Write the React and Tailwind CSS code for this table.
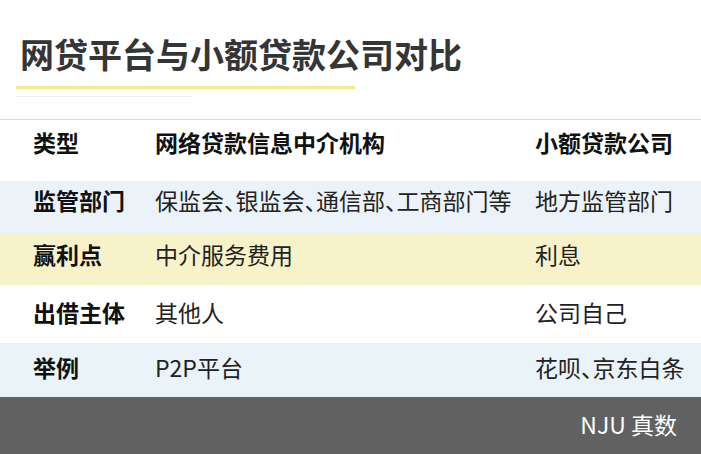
import React from "react";

const P = () => <span className="[font-feature-settings:'halt']">、</span>;

const rows = [
  {
    a: "监管部门",
    b: (
      <>
        保监会<P />银监会<P />通信部<P />工商部门等
      </>
    ),
    c: "地方监管部门",
    bg: "bg-[#ebf3f8]",
    h: "h-[52px] pb-[14px]",
  },
  { a: "赢利点", b: "中介服务费用", c: "利息", bg: "bg-[#f7f2c9]", h: "h-[52px] pb-[9px]" },
  { a: "出借主体", b: "其他人", c: "公司自己", bg: "bg-white", h: "h-[58px] pb-[4px]" },
  {
    a: "举例",
    b: "P2P平台",
    c: (
      <>
        花呗<P />京东白条
      </>
    ),
    bg: "bg-[#e9f3f8]",
    h: "h-[54px] pb-[6px]",
  },
];

export default function App() {
  return (
    <div className="w-[701px] h-[454px] bg-white flex flex-col overflow-hidden font-['Noto_Sans_CJK_SC','Noto_Sans',sans-serif]">
      <div className="h-[119px] flex flex-col">
        <h1 className="pl-[20px] pt-[35px] text-[34px] leading-[37px] font-bold text-[#353535] whitespace-nowrap">
          网贷平台与小额贷款公司对比
        </h1>
        <div className="ml-[16px] mt-[14px] w-[339px] h-[3px] bg-[#f4ea8c]" />
        <div className="ml-[16px] mt-[7px] w-[176px] h-px bg-[#f6eeee]" />
      </div>
      <div className="h-px bg-[#dcdcdc]" />
      <div className="h-[61px] grid grid-cols-[155px_380px_1fr] items-center text-[23px] font-bold text-[#111111] pb-[16px]">
        <div className="pl-[33px]">类型</div>
        <div className="whitespace-nowrap">网络贷款信息中介机构</div>
        <div className="whitespace-nowrap">小额贷款公司</div>
      </div>
      {rows.map((r) => (
        <div
          key={r.a}
          className={`${r.h} ${r.bg} grid grid-cols-[155px_380px_1fr] items-center text-[23px] text-[#222222]`}
        >
          <div className="pl-[33px] font-bold text-[#111111] whitespace-nowrap">{r.a}</div>
          <div className="whitespace-nowrap">{r.b}</div>
          <div className="whitespace-nowrap">{r.c}</div>
        </div>
      ))}
      <div className="flex-1 bg-[#616161] flex items-center justify-end pr-[24px] pb-[2px] text-[23px] text-white">
        NJU 真数
      </div>
    </div>
  );
}
